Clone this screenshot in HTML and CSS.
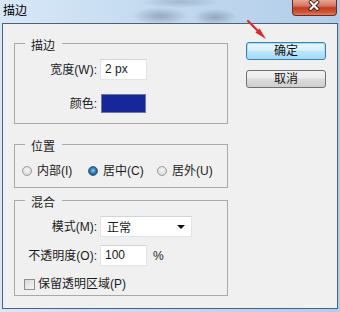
FILE: index.html
```html
<!DOCTYPE html>
<html>
<head>
<meta charset="utf-8">
<link rel="stylesheet" href="styles.css">
</head>
<body>
<div class="window">
  <div class="titlebar">
    <span class="title">描边</span>
    <span class="close">
      <svg width="45" height="16" viewBox="0 0 45 16">
        <path d="M19 3 L26 10 M26 3 L19 10" stroke="#3a1a14" stroke-width="4" stroke-linecap="round"/>
        <path d="M19 3 L26 10 M26 3 L19 10" stroke="#ffffff" stroke-width="2.2" stroke-linecap="round"/>
      </svg>
    </span>
  </div>
  <div class="client">
    <div class="left">
      <fieldset class="group g1">
        <legend>描边</legend>
        <div class="row row-a"><span class="lbl">宽度(W):</span><span class="input">2 px</span></div>
        <div class="row row-b"><span class="lbl">颜色:</span><span class="swatch"></span></div>
      </fieldset>
      <fieldset class="group g2">
        <legend>位置</legend>
        <div class="radios">
          <span class="radio"><span class="dot"></span>内部(I)</span>
          <span class="radio"><span class="dot on"></span>居中(C)</span>
          <span class="radio"><span class="dot"></span>居外(U)</span>
        </div>
      </fieldset>
      <fieldset class="group g3">
        <legend>混合</legend>
        <div class="row row-a"><span class="lbl">模式(M):</span><span class="select">正常<span class="caret"></span></span></div>
        <div class="row row-c"><span class="lbl">不透明度(O):</span><span class="input">100</span><span class="pct">%</span></div>
        <div class="check"><span class="box"></span>保留透明区域(P)</div>
      </fieldset>
    </div>
    <div class="buttons">
      <span class="btn default">确定</span>
      <span class="btn">取消</span>
    </div>
  </div>
  <svg class="arrow" width="30" height="30" viewBox="0 0 30 30">
    <path d="M2 2 L14 14" stroke="#e0262a" stroke-width="2.2" stroke-linecap="round"/>
    <polygon points="20,20 9.4,13.5 13.5,9.4" fill="#e0262a"/>
  </svg>
</div>
</body>
</html>
```

FILE: styles.css
```css
* { box-sizing: border-box; }
html, body { margin: 0; padding: 0; }
body {
  width: 340px;
  height: 312px;
  overflow: hidden;
  font-family: "Liberation Sans", "Noto Sans CJK SC", sans-serif;
  font-size: 12px;
  color: #1b1b1b;
}
.window {
  position: relative;
  width: 340px;
  height: 312px;
  background:
    radial-gradient(ellipse 28px 9px at 160px 16px, rgba(60, 80, 100, 0.35), transparent),
    radial-gradient(ellipse 22px 8px at 215px 17px, rgba(60, 80, 100, 0.35), transparent),
    radial-gradient(ellipse 40px 6px at 180px 2px, rgba(90, 110, 130, 0.3), transparent),
    linear-gradient(90deg, #d8e8f7 0%, #c3daf0 45%, #b3cde8 100%);
}
.titlebar {
  height: 23px;
  display: flex;
  justify-content: space-between;
  align-items: flex-start;
}
.title {
  padding: 3px 0 0 3px;
  line-height: 16px;
  font-size: 12px;
  color: #000;
}
.close {
  width: 45px;
  height: 16px;
  margin-right: 3px;
  border: 1px solid #6b2b20;
  border-top: none;
  border-radius: 0 0 4px 4px;
  background: linear-gradient(#e9a695 0%, #d7745e 40%, #c23b22 52%, #cf5336 80%, #e07c5c 100%);
  display: flex;
  overflow: hidden;
}
.close svg { display: block; margin: -1px 0 0 -1px; }
.client {
  margin: 0 2px;
  height: 286px;
  border: 1px solid #4f6179;
  background: #f0f0f0;
  display: flex;
  gap: 18px;
  padding-left: 11px;
}
.left { display: flex; flex-direction: column; }
.group {
  width: 214px;
  margin: 0;
  padding: 0;
  border: 1px solid #a9a9a9;
  min-inline-size: 0;
}
.group legend {
  margin-left: 10px;
  padding: 6px 7px 0 6px;
  line-height: 14px;
  font-size: 12px;
}
.g1 { margin-top: 9px; padding: 6px 0 10px; }
.g2 { margin-top: 10px; padding: 9px 0 8px; }
.g3 { margin-top: 2px; padding: 6px 0 4px; }
.row { display: flex; align-items: center; height: 21px; }
.row-b { height: 19px; margin-top: 14px; }
.row-c { margin-top: 8px; }
.lbl {
  width: 82px;
  text-align: right;
  margin-right: 3px;
  line-height: 16px;
}
.input {
  width: 47px;
  height: 21px;
  background: #fff;
  border: 1px solid #e1e5ea;
  border-top-color: #cfd4da;
  padding-left: 4px;
  line-height: 19px;
}
.swatch {
  width: 45px;
  height: 19px;
  margin-left: 1px;
  background: #17279a;
  border: 1px solid #6f7896;
}
.pct { margin-left: 6px; }
.select {
  width: 92px;
  height: 21px;
  background: #fff;
  border: 1px solid #e1e5ea;
  border-top-color: #cfd4da;
  padding: 0 6px 0 6px;
  display: flex;
  align-items: center;
  justify-content: space-between;
}
.caret {
  width: 0;
  height: 0;
  border-left: 4px solid transparent;
  border-right: 4px solid transparent;
  border-top: 4px solid #111;
}
.radios {
  display: grid;
  grid-template-columns: 66px 69px auto;
  height: 16px;
  padding-left: 7px;
  align-items: center;
}
.radio { display: flex; align-items: center; line-height: 16px; }
.dot {
  width: 10px;
  height: 10px;
  border-radius: 50%;
  border: 1px solid #9a9a9a;
  background: radial-gradient(circle at 50% 40%, #f6f6f6 0%, #dcdcdc 70%, #cfcfcf 100%);
  margin-right: 5px;
  flex: none;
}
.dot.on {
  border-color: #2c5f86;
  background: radial-gradient(circle at 50% 45%, #8fd0ee 0%, #2e7fb5 45%, #1c4f79 75%, #e8eef2 80%, #d5dbe0 100%);
}
.check {
  display: flex;
  align-items: center;
  height: 14px;
  margin-top: 11px;
  padding-left: 9px;
  line-height: 14px;
}
.box {
  width: 11px;
  height: 11px;
  border: 1px solid #8f8f8f;
  background: linear-gradient(135deg, #d8d8d8, #f7f7f7);
  margin-right: 3px;
  flex: none;
}
.buttons {
  display: flex;
  flex-direction: column;
  gap: 10px;
  padding-top: 18px;
}
.btn {
  width: 80px;
  height: 18px;
  border: 1px solid #707070;
  border-radius: 3px;
  background: linear-gradient(#f3f3f3 0%, #ebebeb 45%, #dcdcdc 50%, #cfcfcf 100%);
  display: flex;
  align-items: center;
  justify-content: center;
  line-height: 14px;
  color: #111;
}
.btn.default {
  border-color: #3c7fb1;
  background: linear-gradient(#eaf6fd 0%, #d9f0fc 45%, #bee6fd 50%, #a7d9f5 100%);
  box-shadow: inset 0 0 0 1px #9fe0f8;
}
.arrow {
  position: absolute;
  left: 246px;
  top: 19px;
}
```
